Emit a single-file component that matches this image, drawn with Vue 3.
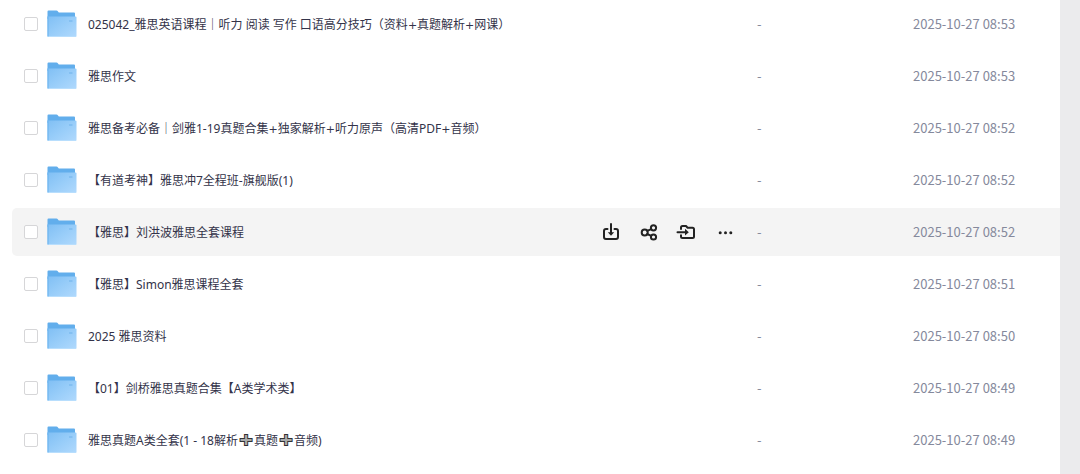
<script setup>
import { ref } from 'vue'

const files = ref([
  { name: '025042_雅思英语课程｜听力 阅读 写作 口语高分技巧（资料+真题解析+网课）', date: '2025-10-27 08:53' },
  { name: '雅思作文', date: '2025-10-27 08:53' },
  { name: '雅思备考必备｜剑雅1-19真题合集+独家解析+听力原声（高清PDF+音频）', date: '2025-10-27 08:52' },
  { name: '【有道考神】雅思冲7全程班-旗舰版(1)', date: '2025-10-27 08:52' },
  { name: '【雅思】刘洪波雅思全套课程', date: '2025-10-27 08:52', active: true },
  { name: '【雅思】Simon雅思课程全套', date: '2025-10-27 08:51' },
  { name: '2025 雅思资料', date: '2025-10-27 08:50' },
  { name: '【01】剑桥雅思真题合集【A类学术类】', date: '2025-10-27 08:49' },
  { name: '雅思真题A类全套(1 - 18解析➕真题➕音频)', date: '2025-10-27 08:49' },
].map((file) => ({ ...file, checked: false, parts: file.name.split(/([➕+])/) })))

const signClass = { '➕': 'heavy-plus', '+': 'plus' }
</script>

<template>
  <main class="page">
    <svg class="defs" width="0" height="0" aria-hidden="true">
      <defs>
        <linearGradient id="folder-front" x1="0" y1="0" x2="1" y2="1">
          <stop offset="0" stop-color="#80bff4" />
          <stop offset="0.5" stop-color="#98cdf9" />
          <stop offset="1" stop-color="#b0d9fd" />
        </linearGradient>
      </defs>
    </svg>
    <table class="files">
      <tbody>
        <tr v-for="(file, i) in files" :key="i" :class="{ active: file.active }">
          <td class="check">
            <input v-model="file.checked" type="checkbox" :aria-label="file.name" />
          </td>
          <td class="main">
            <div class="entry">
              <svg class="folder" width="30" height="28" viewBox="0 0 30 28" aria-hidden="true">
                <path d="M1.5 0.5H9.5Q10.3 0.5 10.8 1.3L11.8 2.5H27Q28 2.5 28 3.5V9H0.5V1.5Q0.5 0.5 1.5 0.5Z" fill="#62aeec" />
                <path d="M1 6.5H28.5Q29.5 6.5 29.5 7.5V26Q29.5 27 28.5 27H1.5Q0.5 27 0.5 26V6.5Z" fill="url(#folder-front)" />
                <path d="M1 6.5V26.5" stroke="#68b2ee" fill="none" />
                <path d="M1.5 26.5H29" stroke="#b8defd" fill="none" />
                <path d="M22 11H25.5" stroke="#84c0f2" stroke-width="2" fill="none" />
              </svg>
              <a class="name" href="#"><template v-for="(part, j) in file.parts" :key="j"><span v-if="signClass[part]" :class="signClass[part]">{{ part === '➕' ? '➕\uFE0E' : part }}</span><template v-else>{{ part }}</template></template></a>
              <div v-if="file.active" class="actions">
                <button type="button" aria-label="下载">
                  <svg width="18" height="18" viewBox="0 0 18 18">
                    <path d="M5.5 6H4Q2 6 2 8V14Q2 16 4 16H14Q16 16 16 14V8Q16 6 14 6H12.5M9 1V10" />
                    <path class="solid" d="M5.8 9.2H12.2L9 12.8Z" />
                  </svg>
                </button>
                <button type="button" aria-label="分享">
                  <svg width="18" height="18" viewBox="0 0 18 18">
                    <circle cx="4.7" cy="9.4" r="3" />
                    <circle cx="13.5" cy="4.8" r="2.6" />
                    <circle cx="13.5" cy="14" r="2.6" />
                    <path d="M7.3 7.9L11.2 6.1M7.2 11L11.2 12.8" />
                  </svg>
                </button>
                <button type="button" aria-label="移动到">
                  <svg width="18" height="18" viewBox="0 0 18 18">
                    <path d="M3 6V4.5Q3 3 4.5 3H8L9.6 4.7H14.5Q16 4.7 16 6.2V13.5Q16 15 14.5 15H4.5Q3 15 3 13.5V12.2M-0.5 9.2H8" />
                    <path class="solid" d="M7 5.8L10.8 9.2L7 12.6Z" />
                  </svg>
                </button>
                <button type="button" aria-label="更多">
                  <svg width="18" height="18" viewBox="0 0 18 18">
                    <g class="solid">
                      <circle cx="4.2" cy="9.7" r="1.5" />
                      <circle cx="9.5" cy="9.7" r="1.5" />
                      <circle cx="14.8" cy="9.7" r="1.5" />
                    </g>
                  </svg>
                </button>
              </div>
            </div>
          </td>
          <td class="size">-</td>
          <td class="date">{{ file.date }}</td>
        </tr>
      </tbody>
    </table>
    <div class="rail"></div>
  </main>
</template>

<style>
body {
  background: #fff;
}
</style>

<style scoped>
.page {
  display: flex;
  align-items: stretch;
  min-height: 100vh;
  padding-left: 12px;
  box-sizing: border-box;
  font-family: "Noto Sans", "Noto Sans CJK SC", sans-serif;
  font-size: 12px;
  line-height: 20px;
  color: #333349;
}

.defs {
  position: absolute;
}

.files {
  flex: 1;
  align-self: flex-start;
  min-width: 0;
  margin-top: -4px;
  border-collapse: separate;
  border-spacing: 0 4px;
  table-layout: auto;
}

td {
  height: 48px;
  padding: 0;
  vertical-align: middle;
}

.active td {
  background: #f4f4f4;
}

.active td:first-child {
  border-radius: 5px 0 0 5px;
}

.check {
  width: 35px;
}

.check input {
  display: block;
  appearance: none;
  width: 14px;
  height: 14px;
  margin: 0 0 0 12px;
  border: 1px solid #d6d6d8;
  border-radius: 2px;
  background: #fff;
}

.check input:checked {
  background: #62aeec;
}

.entry {
  display: flex;
  align-items: center;
}

.folder {
  flex: none;
  margin-right: 11px;
}

.name {
  flex: 1;
  padding-top: 2px;
  color: inherit;
  text-decoration: none;
  white-space: nowrap;
}

.plus,
.heavy-plus {
  font-family: "DejaVu Sans", sans-serif;
  line-height: 1;
}

.plus {
  font-size: 11px;
}

.heavy-plus {
  padding: 0 2px;
  font-size: 16px;
  color: #aaa;
  -webkit-text-stroke: 2px #333;
  paint-order: stroke fill;
}

.actions {
  display: flex;
  gap: 20px;
  margin-right: 23px;
}

.actions button {
  display: block;
  padding: 0;
  border: 0;
  background: none;
  cursor: pointer;
}

.actions svg {
  display: block;
  overflow: visible;
  fill: none;
  stroke: #222;
  stroke-width: 2;
  stroke-linecap: round;
  stroke-linejoin: round;
}

.actions .solid {
  fill: #222;
  stroke: none;
}

.size,
.date {
  font-family: "Noto Sans CJK SC", sans-serif;
  font-size: 13px;
  color: #85899c;
  white-space: nowrap;
}

.size {
  width: 156px;
}

.date {
  width: 147px;
}

.rail {
  flex: none;
  width: 20px;
  background: #ebebed;
}
</style>
